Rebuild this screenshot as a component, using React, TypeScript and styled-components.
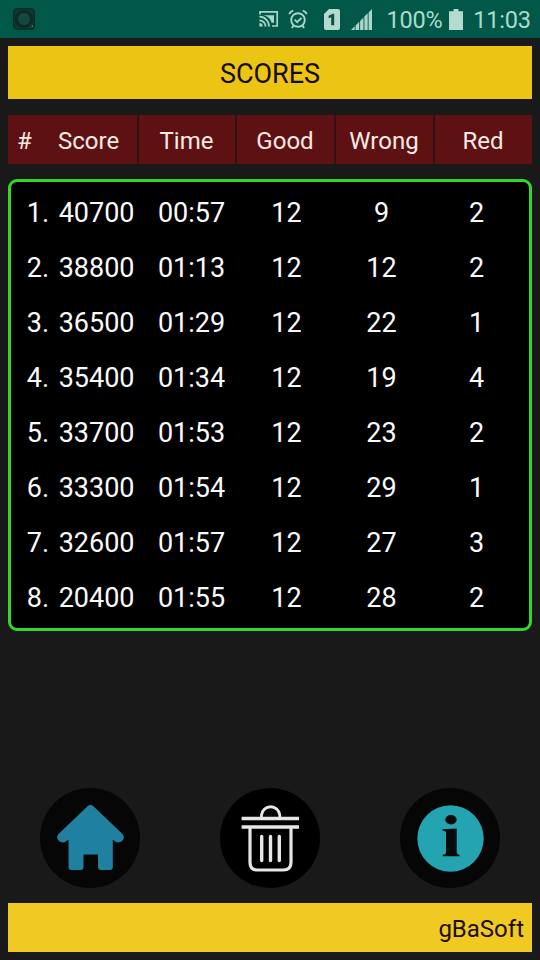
import React from "react";
import styled, { createGlobalStyle } from "styled-components";

const GlobalStyle = createGlobalStyle`
  * { box-sizing: border-box; }
  body { margin: 0; background: #191919; font-family: Roboto, sans-serif; }
`;

const Screen = styled.div`
  width: 540px;
  height: 960px;
  display: flex;
  flex-direction: column;
  background: #191919;
  overflow: hidden;
`;

const StatusBar = styled.header`
  height: 38px;
  flex: none;
  display: flex;
  align-items: center;
  padding: 0 9px 0 12px;
  background: #015849;
  color: #a9dccb;
  font-size: 23.5px;
  line-height: 38px;
`;

const StatusIcon = styled.svg<{ $gap?: number }>`
  display: block;
  flex: none;
  margin-left: ${(p) => p.$gap ?? 0}px;
`;

const StatusText = styled.span<{ $gap: number; $width: number }>`
  margin-left: ${(p) => p.$gap}px;
  width: ${(p) => p.$width}px;
  padding-top: 2px;
  text-align: center;
  letter-spacing: -0.2px;
  white-space: nowrap;
`;

const Spacer = styled.div`
  flex: 1;
`;

const Body = styled.main`
  flex: 1;
  display: flex;
  flex-direction: column;
  padding: 8px;
`;

const Title = styled.h1`
  margin: 0 0 16px;
  height: 53px;
  line-height: 57px;
  background: #ebc414;
  color: #140c04;
  font-size: 27px;
  font-weight: 400;
  text-align: center;
`;

const Headings = styled.div`
  display: grid;
  grid-template-columns: 129px 96px 97px 97px 97px;
  grid-template-rows: 49px;
  column-gap: 2px;
  height: 49px;
  margin-bottom: 15px;
  background: #301012;
`;

const Heading = styled.div`
  display: flex;
  justify-content: center;
  height: 49px;
  padding-right: 1px;
  background: #5e1113;
  color: #fbe9e4;
  font-size: 24px;
  line-height: 53px;
`;

const RankLabel = styled.span`
  width: 41px;
  padding-left: 9px;
`;

const ScoreLabel = styled.span`
  flex: 1;
  padding-left: 9px;
`;

const Panel = styled.div`
  height: 452px;
  padding: 3px 5px;
  border: 3px solid #34d52e;
  border-radius: 9px;
  background: #000;
`;

const Row = styled.div`
  display: grid;
  grid-template-columns: 33px 85.5px 9.5px repeat(4, 95px);
  height: 55px;
  line-height: 56px;
  color: #fbfbfb;
  font-size: 27px;
`;

const Cell = styled.span<{ $align?: "right" | "center" }>`
  text-align: ${(p) => p.$align ?? "center"};
  white-space: nowrap;
`;

const Actions = styled.nav`
  display: flex;
  justify-content: space-between;
  margin: auto 32px 15px;
`;

const RoundButton = styled.button<{ $tone: string }>`
  width: 100px;
  height: 100px;
  padding: 0;
  border: 0;
  border-radius: 50%;
  background: ${(p) => p.$tone};
  svg { display: block; }
`;

const Footer = styled.footer`
  height: 49px;
  padding-right: 8px;
  background: #f0ca23;
  color: #210d08;
  font-size: 24px;
  line-height: 52px;
  text-align: right;
`;

const scores = [
  ["40700", "00:57", 12, 9, 2],
  ["38800", "01:13", 12, 12, 2],
  ["36500", "01:29", 12, 22, 1],
  ["35400", "01:34", 12, 19, 4],
  ["33700", "01:53", 12, 23, 2],
  ["33300", "01:54", 12, 29, 1],
  ["32600", "01:57", 12, 27, 3],
  ["20400", "01:55", 12, 28, 2],
];

const AppGlyph = () => (
  <StatusIcon width="24" height="24" viewBox="0 0 24 24">
    <rect x="1" y="1" width="22" height="22" rx="4" fill="#0f3a32" />
    <rect x="1.8" y="1.8" width="20.4" height="20.4" rx="4" fill="none" stroke="#082d27" strokeWidth="1.6" />
    <circle cx="12" cy="12" r="7.6" fill="#14493e" stroke="#0d2b26" strokeWidth="3" />
    <circle cx="20.5" cy="19" r="0.8" fill="#5b8c7c" />
  </StatusIcon>
);

const CastGlyph = () => (
  <StatusIcon width="20" height="18" viewBox="0 0 20 18" fill="none" stroke="#a9d6c8">
    <path d="M1 4.5V1.9H18.2V16H13" strokeWidth="1.7" />
    <path d="M4.5 5.2H15V12.8H12.5C11.8 9 8.8 6 4.5 5.2Z" fill="#a9d6c8" stroke="none" />
    <path d="M.4 6.7A9.5 9.5 0 0 1 10 16.6M.4 10.3A6.1 6.1 0 0 1 6.5 16.6" strokeWidth="1.7" />
    <path d="M.4 13.1A3.3 3.3 0 0 1 3.7 16.6H.4Z" fill="#a9d6c8" stroke="none" />
  </StatusIcon>
);

const AlarmGlyph = () => (
  <StatusIcon $gap={9} width="20" height="20" viewBox="0 0 20 20" fill="none" stroke="#a9d6c8" strokeWidth="1.9">
    <circle cx="10" cy="11" r="6.8" />
    <path d="M1.2 5Q2.6 2.2 5.3 1.6M18.8 5Q17.4 2.2 14.7 1.6M6.7 10.6L9.2 13.1 13.5 8.9M5.4 16.4L4 19M14.6 16.4L16 19" />
  </StatusIcon>
);

const SimGlyph = () => (
  <StatusIcon $gap={16} width="16" height="21" viewBox="0 0 16 21">
    <path d="M5 0H14Q16 0 16 2V19Q16 21 14 21H2Q0 21 0 19V5Z" fill="#b5dbd0" />
    <path d="M4.6 6.8L8.6 4.7H10.2V16.2H7.2V8.2L4.6 9.2Z" fill="#075447" />
  </StatusIcon>
);

const SignalGlyph = () => (
  <StatusIcon $gap={11} width="22" height="21" viewBox="0 0 22 21" fill="#a9d6c8">
    <path d="M0 21L3.7 17.3V21ZM4.6 21V16.4L8.2 12.8V21ZM9.1 21V11.9L12.5 8.5V21ZM13.4 21V7.6L16.7 4.3V21ZM17.6 21V3.4L21 0V21Z" />
  </StatusIcon>
);

const BatteryGlyph = () => (
  <StatusIcon $gap={6} width="14" height="21" viewBox="0 0 14 21">
    <path d="M4.5 0H9.5V2.3H14V21H0V2.3H4.5Z" fill="#b5dbd0" />
  </StatusIcon>
);

const HomeGlyph = () => (
  <svg width="100" height="100" viewBox="0 0 100 100" fill="#20809f">
    <path d="M47.3 18.5Q50.5 15.7 53.7 18.5L82 45.5Q85.7 49.6 82 53.1Q78.6 56 74.5 53L72.8 51.6V79Q72.8 82 69.8 82H61Q58 82 58 79V66.5H43.5V79Q43.5 82 40.5 82H31.5Q28.5 82 28.5 79V51.6L26.5 53Q22.4 56 19 53.1Q15.3 49.6 19 45.5Z" />
  </svg>
);

const TrashGlyph = () => (
  <svg width="100" height="100" viewBox="0 0 100 100" fill="none" stroke="#e6e6e6">
    <path d="M41.5 30V27A9.2 9.2 0 0 1 59.8 27V30" strokeWidth="2.8" />
    <path d="M21.6 30.5H79M21.6 39H79" strokeWidth="3.4" />
    <path d="M30 40V74.5Q30 82 37.5 82H63.5Q71 82 71 74.5V40" strokeWidth="3.2" />
    <path d="M41.7 48.5V72.5M50.5 48.5V72.5M59.3 48.5V72.5" strokeWidth="3.4" strokeLinecap="round" />
  </svg>
);

const InfoGlyph = () => (
  <svg width="100" height="100" viewBox="0 0 100 100">
    <circle cx="50.5" cy="50.5" r="33.2" fill="#24a3b1" />
    <ellipse cx="51" cy="31.7" rx="5.7" ry="4.7" fill="#060b0c" />
    <path d="M42.3 41.2L56.7 40.5V64.5Q56.7 66.6 59.5 66.8V68.3H42.7V66.8Q46 66.6 46 64.5V44.8Q46 42.8 42.3 42.6Z" fill="#060b0c" />
  </svg>
);

export default function App() {
  return (
    <Screen>
      <GlobalStyle />
      <StatusBar>
        <AppGlyph />
        <Spacer />
        <CastGlyph />
        <AlarmGlyph />
        <SimGlyph />
        <SignalGlyph />
        <StatusText $gap={13} $width={57}>100%</StatusText>
        <BatteryGlyph />
        <StatusText $gap={10} $width={58}>11:03</StatusText>
      </StatusBar>
      <Body>
        <Title>SCORES</Title>
        <Headings>
          <Heading>
            <RankLabel>#</RankLabel>
            <ScoreLabel>Score</ScoreLabel>
          </Heading>
          {["Time", "Good", "Wrong", "Red"].map((label) => (
            <Heading key={label}>{label}</Heading>
          ))}
        </Headings>
        <Panel>
          {scores.map(([score, ...stats], i) => (
            <Row key={score}>
              <Cell $align="right">{i + 1}.</Cell>
              <Cell $align="right">{score}</Cell>
              <span />
              {stats.map((value, j) => (
                <Cell key={j}>{value}</Cell>
              ))}
            </Row>
          ))}
        </Panel>
        <Actions>
          <RoundButton $tone="#060606" aria-label="Home"><HomeGlyph /></RoundButton>
          <RoundButton $tone="#000" aria-label="Delete"><TrashGlyph /></RoundButton>
          <RoundButton $tone="#060606" aria-label="Info"><InfoGlyph /></RoundButton>
        </Actions>
        <Footer>gBaSoft</Footer>
      </Body>
    </Screen>
  );
}
